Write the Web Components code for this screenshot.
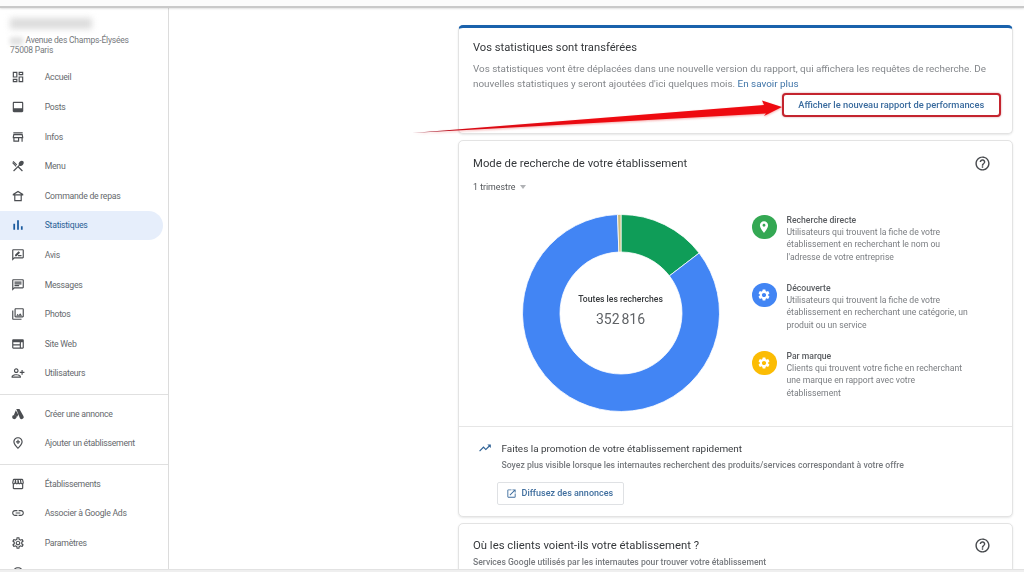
<!DOCTYPE html>
<html lang="fr"><head><meta charset="utf-8"><title>Statistiques</title>
<style>
html,body{margin:0;padding:0;background:#fff;font-family:Roboto,"Liberation Sans",sans-serif;}
body{width:1024px;height:572px;overflow:hidden;}
</style></head><body>
<gbp-app></gbp-app>
<script>
const P={
dash:'M19 5v2h-4V5h4M9 5v6H5V5h4m10 8v6h-4v-6h4M9 17v2H5v-2h4M21 3h-8v6h8V3zM11 3H3v10h8V3zm10 8h-8v10h8V11zm-10 4H3v6h8v-6z',
posts:'M19 3H5c-1.1 0-2 .9-2 2v14c0 1.1.9 2 2 2h14c1.1 0 2-.9 2-2V5c0-1.1-.9-2-2-2zm0 2v9H5V5h14z',
store:'M18.36 9l.6 3H5.04l.6-3h12.72M20 4H4v2h16V4zm0 3H4l-1 5v2h1v6h10v-6h4v6h2v-6h1v-2l-1-5zM6 18v-4h6v4H6z',
menu:'M3.7 19.87l1.41 1.41L12 14.41l6.88 6.88 1.41-1.41L13.41 13l1.47-1.47c1.53.71 3.68.21 5.27-1.38 1.91-1.91 2.28-4.65.81-6.12-1.46-1.46-4.2-1.1-6.12.81-1.59 1.59-2.09 3.74-1.38 5.27L3.7 19.87zM4.3 3.3 2.9 4.7l6.2 6.2 1.4-1.4zM8.1 13.34l1.4-1.4L3.2 5.6 2 7z',
order:'M12 3 3 8.500V11h2.500v10h13V11H21V8.500zM7.500 11h9v8h-9zM6.500 9 12 5.500 17.500 9z',
chart:'M4 10h3v10H4zM10.5 4h3v16h-3zM17 14h3v6h-3z',
avis:'M20 2H4c-1.1 0-2 .9-2 2v18l4-4h14c1.1 0 2-.9 2-2V4c0-1.1-.9-2-2-2zm0 14H5.17L4 17.17V4h16v12zM7 14h2.5l6-6L13 5.5l-6 6zm5 0h6v-2h-6z',
msg:'M20 2H4c-1.1 0-2 .9-2 2v18l4-4h14c1.1 0 2-.9 2-2V4c0-1.1-.9-2-2-2zm0 14H5.17L4 17.17V4h16v12zM6 12h8v2H6zm0-3h12v2H6zm0-3h12v2H6z',
photo:'M20 4v12H8V4h12m0-2H8c-1.1 0-2 .9-2 2v12c0 1.1.9 2 2 2h12c1.1 0 2-.9 2-2V4c0-1.1-.9-2-2-2zm-8.5 9.67l1.69 2.26 2.48-3.1L19 15H9zM2 6v14c0 1.1.9 2 2 2h14v-2H4V6H2z',
web:'M20 4H4c-1.1 0-2 .9-2 2v12c0 1.1.9 2 2 2h16c1.1 0 2-.9 2-2V6c0-1.1-.9-2-2-2zM4 9h11v3.5H4V9zm0 5.5h11V18H4v-3.5zM20 18h-3V9h3v9z',
user:'M9 12c2.21 0 4-1.79 4-4s-1.79-4-4-4-4 1.79-4 4 1.79 4 4 4zm0-6c1.1 0 2 .9 2 2s-.9 2-2 2-2-.9-2-2 .9-2 2-2zm0 8c-2.67 0-8 1.34-8 4v2h16v-2c0-2.66-5.33-4-8-4zm-6 4c.22-.72 3.31-2 6-2 2.7 0 5.8 1.29 6 2H3zM20 10V7h-2v3h-3v2h3v3h2v-3h3v-2z',
ads:'M9 3.5h5.5l7 12.2a3.6 3.6 0 0 1-6.2 3.6zM5.6 20.9a3.7 3.7 0 1 0 0-7.4 3.7 3.7 0 0 0 0 7.4zM8.2 5.4l4.4 7.7-3.3 5.6a3.6 3.6 0 0 0-1.3-4.4 3.9 3.9 0 0 0-3-.6z',
addpin:'M12 2C7.6 2 4 5.6 4 10c0 5.6 8 12.5 8 12.5S20 15.6 20 10c0-4.4-3.6-8-8-8zm0 17.7C9.8 17.6 6 13.300 6 10c0-3.300 2.700-6 6-6s6 2.700 6 6c0 3.300-3.800 7.600-6 9.700zM13 6.500h-2V9H8.500v2H11v2.500h2V11h2.500V9H13z',
shop:'M21.900 8.900 20.800 4.400C20.600 3.600 19.800 3 19 3H5c-.8 0-1.600.6-1.800 1.400L2.100 8.900C1.800 10 2.100 11.100 3 11.900V19c0 1.100.9 2 2 2h14c1.100 0 2-.9 2-2v-7.100c.9-.8 1.200-1.900.9-3zM19 5l1 4.300c.1.600-.3 1.200-1 1.200-.6 0-1-.4-1.100-1L17.300 5zM13 5h2.300l.6 4.600c.1.500-.4.900-1 .9-.5 0-.9-.4-.9-1zM8.700 5H11v4.500c0 .6-.4 1-1 1s-1-.5-.9-1zM4 9.300 5 5h1.700l-.6 4.500c-.1.600-.5 1-1.100 1-.7 0-1.100-.6-1-1.200zM5 19v-6.600c1.100.3 2.200 0 3-.7.800.7 1.800 1 2 1s1.300-.3 2-1c.700.7 1.800 1 2 1s1.200-.3 2-1c.800.7 1.900 1 3 .7V19z',
link:'M3.900 12c0-1.710 1.390-3.100 3.100-3.100h4V7H7c-2.760 0-5 2.240-5 5s2.240 5 5 5h4v-1.900H7c-1.710 0-3.100-1.390-3.100-3.100zM8 13h8v-2H8v2zm9-6h-4v1.900h4c1.710 0 3.100 1.390 3.100 3.100s-1.390 3.100-3.100 3.100h-4V17h4c2.760 0 5-2.240 5-5s-2.240-5-5-5z',
gear:'M19.430 12.980c.04-.32.07-.64.07-.98 0-.34-.03-.66-.07-.98l2.110-1.650c.19-.15.24-.42.12-.64l-2-3.460c-.09-.16-.26-.25-.44-.25-.06 0-.12.01-.17.03l-2.490 1c-.52-.4-1.080-.73-1.690-.98l-.38-2.650C14.460 2.180 14.250 2 14 2h-4c-.25 0-.46.18-.49.42l-.38 2.650c-.61.25-1.170.59-1.690.98l-2.490-1c-.06-.02-.12-.03-.18-.03-.17 0-.34.09-.43.25l-2 3.460c-.13.22-.07.49.12.64l2.110 1.650c-.04.32-.07.65-.07.98 0 .33.03.66.07.98l-2.110 1.650c-.19.15-.24.42-.12.64l2 3.460c.09.16.26.25.44.25.06 0 .12-.01.17-.03l2.490-1c.52.4 1.080.73 1.690.98l.38 2.650c.03.24.24.42.49.42h4c.25 0 .46-.18.49-.42l.38-2.650c.61-.25 1.170-.59 1.690-.98l2.490 1c.06.02.12.03.18.03.17 0 .34-.09.43-.25l2-3.460c.12-.22.07-.49-.12-.64l-2.110-1.650zm-1.980-1.710c.04.31.05.52.05.73 0 .21-.02.43-.05.73l-.14 1.130.89.7 1.080.84-.7 1.210-1.270-.51-1.040-.42-.9.68c-.43.32-.84.56-1.250.73l-1.060.43-.16 1.130-.2 1.350h-1.400l-.19-1.350-.16-1.130-1.060-.43c-.43-.18-.83-.41-1.230-.71l-.91-.7-1.060.43-1.270.51-.7-1.210 1.080-.84.89-.7-.14-1.130c-.03-.31-.05-.54-.05-.74s.02-.43.05-.73l.14-1.130-.89-.7-1.080-.84.7-1.210 1.270.51 1.040.42.9-.68c.43-.32.84-.56 1.250-.73l1.060-.43.16-1.130.2-1.350h1.390l.19 1.350.16 1.130 1.060.43c.43.18.83.41 1.230.71l.91.7 1.060-.43 1.270-.51.7 1.210-1.070.85-.89.7.14 1.130zM12 8c-2.210 0-4 1.790-4 4s1.790 4 4 4 4-1.790 4-4-1.790-4-4-4zm0 6c-1.100 0-2-.9-2-2s.9-2 2-2 2 .9 2 2-.9 2-2 2z',
help:'M11 18h2v-2h-2v2zm1-16C6.480 2 2 6.480 2 12s4.480 10 10 10 10-4.480 10-10S17.520 2 12 2zm0 18c-4.410 0-8-3.590-8-8s3.590-8 8-8 8 3.590 8 8-3.590 8-8 8zm0-14c-2.210 0-4 1.790-4 4h2c0-1.100.9-2 2-2s2 .9 2 2c0 2-3 1.750-3 5h2c0-2.250 3-2.500 3-5 0-2.210-1.790-4-4-4z',
trend:'M16 6l2.290 2.290-4.880 4.880-4-4L2 16.590 3.410 18l6-6 4 4 6.300-6.290L22 12V6z',
open:'M19 19H5V5h7V3H5c-1.110 0-2 .9-2 2v14c0 1.100.89 2 2 2h14c1.100 0 2-.9 2-2v-7h-2v7zM14 3v2h3.590l-9.830 9.830 1.410 1.410L19 6.410V10h2V3h-7z',
pin:'M12 2C8.130 2 5 5.130 5 9c0 5.250 7 13 7 13s7-7.750 7-13c0-3.870-3.130-7-7-7zm0 9.500c-1.380 0-2.500-1.120-2.500-2.500s1.120-2.500 2.500-2.500 2.500 1.120 2.500 2.500-1.120 2.500-2.500 2.500z',
sgear:'M19.140 12.940c.04-.3.06-.61.06-.94 0-.32-.02-.64-.07-.94l2.030-1.580c.18-.14.23-.41.12-.61l-1.920-3.320c-.12-.22-.37-.29-.59-.22l-2.390.96c-.5-.38-1.030-.7-1.620-.94l-.36-2.540c-.04-.24-.24-.41-.48-.41h-3.840c-.24 0-.43.17-.47.41l-.36 2.540c-.59.24-1.130.57-1.620.94l-2.390-.96c-.22-.08-.47 0-.59.22L2.740 8.870c-.12.21-.08.47.12.61l2.030 1.580c-.05.3-.09.63-.09.94s.02.64.07.94l-2.030 1.580c-.18.14-.23.41-.12.61l1.920 3.320c.12.22.37.29.59.22l2.390-.96c.5.38 1.030.7 1.620.94l.36 2.540c.05.24.24.41.48.41h3.840c.24 0 .44-.17.47-.41l.36-2.540c.59-.24 1.130-.56 1.620-.94l2.390.96c.22.08.47 0 .59-.22l1.920-3.320c.12-.22.07-.47-.12-.61l-2.010-1.580zM12 15.600c-1.980 0-3.600-1.620-3.600-3.600s1.620-3.600 3.600-3.600 3.600 1.620 3.600 3.600-1.620 3.600-3.600 3.600z'
};
class GIcon extends HTMLElement{
  connectedCallback(){
    const s=this.getAttribute('size')||14;
    this.attachShadow({mode:'open'}).innerHTML=`<style>:host{display:inline-flex;width:${s}px;height:${s}px;flex:none}svg{width:100%;height:100%;display:block;fill:currentColor}</style><svg viewBox="0 0 24 24"><path fill-rule="evenodd" d="${P[this.getAttribute('name')]}"/></svg>`;
  }
}
customElements.define('g-icon',GIcon);

class NavItem extends HTMLElement{
  connectedCallback(){
    const a=this.hasAttribute('active');
    this.attachShadow({mode:'open'}).innerHTML=`<style>
    :host{display:flex;align-items:center;height:29.62px;width:163px;box-sizing:border-box;padding-left:10.500px;
      font-size:8.700px;letter-spacing:-.26px;color:${a?'#2a5f96':'#66696d'};${a?'background:#e6eefb;border-radius:0 15px 15px 0;':''}}
    g-icon{color:${a?'#1a5a9e':'#4b4e52'}}
    span{margin-left:20.200px;white-space:nowrap}
    </style><g-icon name="${this.getAttribute('icon')}" size="14"></g-icon><span>${this.getAttribute('label')}</span>`;
  }
}
customElements.define('nav-item',NavItem);

class GbpSidebar extends HTMLElement{
  connectedCallback(){
    const it=a=>a.map(([i,l,x])=>`<nav-item icon="${i}" label="${l}" ${x||''}></nav-item>`).join('');
    this.attachShadow({mode:'open'}).innerHTML=`<style>
    :host{display:block;width:169px;box-sizing:border-box;border-right:1px solid #dcdcdc;height:100%;overflow:hidden;background:#fff}
    .head{padding:10px 0 0 10px;height:54.600px;box-sizing:border-box;font-size:8.500px;letter-spacing:-.2px;line-height:9.800px;color:#75787c}
    .name{width:82px;height:11px;background:#dcdcdc;filter:blur(3px);margin-bottom:7px}
    .addr{display:flex;align-items:center}
    .addr i{width:13px;height:8px;background:#e2e2e2;filter:blur(2px);margin-right:2.500px}
    hr{border:0;border-top:1px solid #e0e0e0;margin:5.500px 0 4px;width:168px}
    hr.b{margin-bottom:4.500px}
    </style>
    <div class="head"><div class="name"></div><div class="addr"><i></i>Avenue des Champs-Élysées</div><div>75008 Paris</div></div>
    ${it([['dash','Accueil'],['posts','Posts'],['store','Infos'],['menu','Menu'],['order','Commande de repas'],['chart','Statistiques','active'],['avis','Avis'],['msg','Messages'],['photo','Photos'],['web','Site Web'],['user','Utilisateurs']])}
    <hr>
    ${it([['ads','Créer une annonce'],['addpin','Ajouter un établissement']])}
    <hr class="b">
    ${it([['shop','Établissements'],['link','Associer à Google Ads'],['gear','Paramètres'],['help','Aide']])}`;
  }
}
customElements.define('gbp-sidebar',GbpSidebar);

class GbpCard extends HTMLElement{
  connectedCallback(){
    this.attachShadow({mode:'open'}).innerHTML=`<style>
    :host{display:block;width:555px;box-sizing:border-box;border:1px solid #e3e3e3;border-radius:5px;background:#fff;box-shadow:0 1px 2px rgba(60,64,67,.12);overflow:hidden}
    :host([accent]){border-top:3px solid #1a62ac}
    </style><slot></slot>`;
  }
}
customElements.define('gbp-card',GbpCard);

class CardHead extends HTMLElement{
  connectedCallback(){
    this.attachShadow({mode:'open'}).innerHTML=`<style>
    :host{display:flex;justify-content:space-between;align-items:center;padding-right:21.500px;font-size:11.300px;color:#35383b;letter-spacing:.02px}
    </style><span><slot></slot></span><g-icon name="help" size="17" style="color:#46494d"></g-icon>`;
  }
}
customElements.define('card-head',CardHead);

class NoticeCard extends HTMLElement{
  connectedCallback(){
    this.attachShadow({mode:'open'}).innerHTML=`<style>
    :host{display:block}
    .in{padding:13px 11px 0 14px;height:105px;box-sizing:border-box}
    h2{font:400 11.200px/13px Roboto,sans-serif;color:#35383b;margin:0 0 7px}
    p{font-size:9.900px;line-height:15.300px;color:#83868a;margin:0;white-space:nowrap}
    a{color:#3f74a8;text-decoration:none}
    .act{display:flex;justify-content:flex-end;margin-top:1px}
    .btn{width:219.500px;height:24px;box-sizing:border-box;border:2px solid #c4242e;border-radius:4px;display:flex;align-items:center;justify-content:center;font-size:9.300px;font-weight:500;color:#3a6b9e;background:#fff;box-shadow:0 0 2px rgba(170,30,40,.5)}
    </style><gbp-card accent><div class="in">
      <h2>Vos statistiques sont transférées</h2>
      <p>Vos statistiques vont être déplacées dans une nouvelle version du rapport, qui affichera les requêtes de recherche. De<br>nouvelles statistiques y seront ajoutées d'ici quelques mois. <a>En savoir plus</a></p>
      <div class="act"><div class="btn">Afficher le nouveau rapport de performances</div></div>
    </div></gbp-card>`;
  }
}
customElements.define('notice-card',NoticeCard);

class DonutChart extends HTMLElement{
  connectedCallback(){
    const cx=99,cy=99,R=98.500,r=61;
    const pt=(rad,a)=>{const t=a*Math.PI/180;return (cx+rad*Math.sin(t)).toFixed(2)+' '+(cy-rad*Math.cos(t)).toFixed(2)};
    const w=(a,b,c)=>`<path fill="${c}" stroke="#fff" stroke-width=".8" d="M${pt(R,a)}A${R} ${R} 0 ${b-a>180?1:0} 1 ${pt(R,b)}L${pt(r,b)}A${r} ${r} 0 ${b-a>180?1:0} 0 ${pt(r,a)}Z"/>`;
    this.attachShadow({mode:'open'}).innerHTML=`<style>
    :host{display:grid;width:198px;height:198px;flex:none;place-items:center}
    svg,.c{grid-area:1/1}
    svg{width:198px;height:198px;display:block}
    .c{text-align:center;font-size:8.650px;font-weight:500;color:#36393c;margin-top:-4px}
    .n{font-size:14px;font-weight:400;color:#606367;margin-top:7px;word-spacing:-1.500px}
    </style><svg viewBox="0 0 198 198">${w(0,52.500,'#0f9d58')}${w(52.500,358,'#4285f4')}${w(358,360,'#cdbb7a')}</svg>
    <div class="c"><div>Toutes les recherches</div><div class="n">352 816</div></div>`;
  }
}
customElements.define('donut-chart',DonutChart);

class LegendItem extends HTMLElement{
  connectedCallback(){
    this.attachShadow({mode:'open'}).innerHTML=`<style>
    :host{display:flex;height:68px;font-size:8.650px;line-height:12.400px;color:#7a7d81}
    .dot{width:24.500px;height:24.500px;border-radius:50%;background:${this.getAttribute('color')};display:flex;align-items:center;justify-content:center;color:#fff;margin:1px 10px 0 0;flex:none}
    b{display:block;font-weight:500;color:#5a5d61}
    </style><div class="dot"><g-icon name="${this.getAttribute('icon')}" size="${this.getAttribute('isize')||14}"></g-icon></div>
    <div><b>${this.getAttribute('title')}</b><slot></slot></div>`;
  }
}
customElements.define('legend-item',LegendItem);

class SearchCard extends HTMLElement{
  connectedCallback(){
    this.attachShadow({mode:'open'}).innerHTML=`<style>
    :host{display:block;margin-top:6px}
    .top{padding:14px 0 0 14px}
    .sel{font-size:8.800px;color:#505357;display:flex;align-items:center;height:12px;margin-top:9px}
    .sel i{width:0;height:0;border:3.500px solid transparent;border-top:4px solid #b0b2b5;border-bottom:0;margin-left:4.500px}
    .body{display:flex;padding:20.500px 0 0 62.500px;height:232.500px;box-sizing:border-box}
    .leg{margin:0 0 0 32.500px;width:240px}
    .promo{border-top:1px solid #e6e6e6;height:90px;box-sizing:border-box;padding:13px 0 0 19px;display:flex}
    .t{margin-left:9.500px}
    .t h3{font:400 9.930px/17px Roboto,sans-serif;color:#3b3e41;margin:0}
    .t p{font-size:8.680px;line-height:16px;color:#777a7e;margin:0;font-weight:500;white-space:nowrap}
    .act{display:inline-flex;align-items:center;height:23px;width:127px;box-sizing:border-box;border:1px solid #dfe1e4;border-radius:2px;margin:9px 0 0 -5px;padding-left:8px;font-size:9px;font-weight:500;color:#3f6e9e;gap:5px}
    </style><gbp-card>
      <div class="top"><card-head>Mode de recherche de votre établissement</card-head>
        <div class="sel">1 trimestre<i></i></div></div>
      <div class="body"><donut-chart></donut-chart>
        <div class="leg">
          <legend-item color="#34a853" icon="pin" title="Recherche directe">Utilisateurs qui trouvent la fiche de votre<br>établissement en recherchant le nom ou<br>l'adresse de votre entreprise</legend-item>
          <legend-item color="#4285f4" icon="sgear" title="Découverte">Utilisateurs qui trouvent la fiche de votre<br>établissement en recherchant une catégorie, un<br>produit ou un service</legend-item>
          <legend-item color="#fbbc04" icon="sgear" title="Par marque">Clients qui trouvent votre fiche en recherchant<br>une marque en rapport avec votre<br>établissement</legend-item>
        </div></div>
      <div class="promo"><g-icon name="trend" size="14" style="color:#2f6296;margin-top:1px"></g-icon>
        <div class="t"><h3>Faites la promotion de votre établissement rapidement</h3>
        <p>Soyez plus visible lorsque les internautes recherchent des produits/services correspondant à votre offre</p>
        <div class="act"><g-icon name="open" size="11"></g-icon>Diffusez des annonces</div></div></div>
    </gbp-card>`;
  }
}
customElements.define('search-card',SearchCard);

class WhereCard extends HTMLElement{
  connectedCallback(){
    this.attachShadow({mode:'open'}).innerHTML=`<style>
    :host{display:block;margin-top:6px}
    .in{padding:13px 0 0 14px;height:60px;box-sizing:border-box}
    p{font-size:8.600px;line-height:14px;color:#777a7e;margin:1px 0 0;font-weight:500}
    </style><gbp-card><div class="in"><card-head>Où les clients voient-ils votre établissement ?</card-head>
    <p>Services Google utilisés par les internautes pour trouver votre établissement</p></div></gbp-card>`;
  }
}
customElements.define('where-card',WhereCard);

class GbpArrow extends HTMLElement{
  connectedCallback(){
    this.attachShadow({mode:'open'}).innerHTML=`<style>
    :host{position:absolute;left:405px;top:90px;width:385px;height:50px;pointer-events:none}
    svg{width:385px;height:50px;display:block;overflow:visible;filter:drop-shadow(0 1px 1px rgba(235,70,70,.45))}
    </style><svg viewBox="405 90 385 50"><defs><linearGradient id="g" gradientUnits="userSpaceOnUse" x1="412" x2="600" y1="0" y2="0"><stop offset="0" stop-color="#8a1a30"/><stop offset=".3" stop-color="#d80a14"/><stop offset="1" stop-color="#ee0a10"/></linearGradient></defs>
    <path fill="url(#g)" d="M412 133 764 105 762 100.500 782 107 764 116 766 113.500 Z"/></svg>`;
  }
}
customElements.define('gbp-arrow',GbpArrow);

class GbpApp extends HTMLElement{
  connectedCallback(){
    this.attachShadow({mode:'open'}).innerHTML=`<style>
    :host{display:grid;grid-template-rows:8px 1fr;width:1024px;height:572px;position:relative;overflow:hidden;filter:blur(.3px)}
    .bar{border-bottom:2px solid #c9c9c9;box-sizing:border-box;background:#fbfbfb;box-shadow:0 1px 2px rgba(0,0,0,.12);position:relative;z-index:1}
    .row{display:flex;min-height:0;overflow:hidden}
    main{padding:17px 0 0 289px;min-width:0}
    .foot{position:absolute;left:0;right:0;bottom:0;height:2px;background:#efefef;border-top:1px solid #e2e2e2}
    </style><div class="bar"></div>
    <div class="row"><gbp-sidebar></gbp-sidebar><main><notice-card></notice-card><search-card></search-card><where-card></where-card></main></div>
    <gbp-arrow></gbp-arrow><div class="foot"></div>`;
  }
}
customElements.define('gbp-app',GbpApp);
</script>
</body></html>
